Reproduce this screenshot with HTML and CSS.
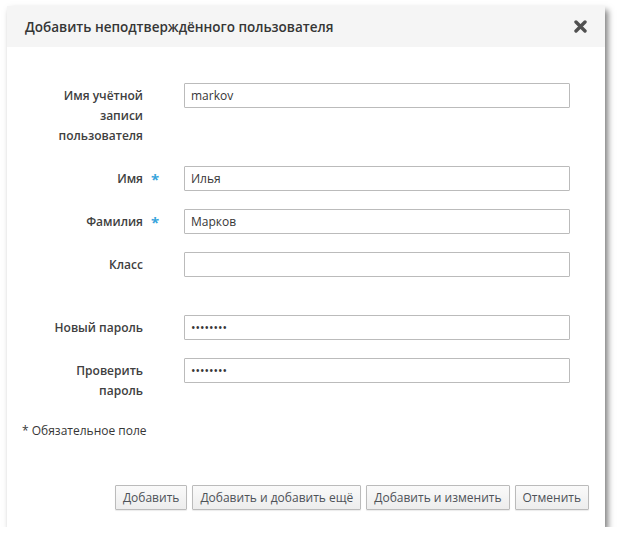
FILE: index.html
```html
<!DOCTYPE html>
<html lang="ru">
<head>
    <meta charset="UTF-8">
    <title>Добавить неподтверждённого пользователя</title>
    <link rel="stylesheet" href="styles.css">
</head>
<body>
    <div class="modal">
        <div class="modal-header">
            <h4>Добавить неподтверждённого пользователя</h4>
            <button class="close" title="Закрыть">
                <svg width="13" height="13" viewBox="0 0 13 13">
                    <path d="M2 2 L11 11 M11 2 L2 11" stroke="#505050" stroke-width="3.4" stroke-linecap="round"/>
                </svg>
            </button>
        </div>

        <div class="modal-body">
            <div class="section">
                <div class="row">
                    <label for="uid">Имя учётной записи пользователя</label>
                    <span class="req"></span>
                    <input type="text" id="uid" value="markov">
                </div>
                <div class="row">
                    <label for="givenname">Имя</label>
                    <span class="req">*</span>
                    <input type="text" id="givenname" value="Илья">
                </div>
                <div class="row">
                    <label for="sn">Фамилия</label>
                    <span class="req">*</span>
                    <input type="text" id="sn" value="Марков">
                </div>
                <div class="row">
                    <label for="userclass">Класс</label>
                    <span class="req"></span>
                    <input type="text" id="userclass" value="">
                </div>
            </div>

            <div class="section">
                <div class="row">
                    <label for="pass">Новый пароль</label>
                    <span class="req"></span>
                    <input type="password" id="pass" value="secret12">
                </div>
                <div class="row">
                    <label for="pass2">Проверить пароль</label>
                    <span class="req"></span>
                    <input type="password" id="pass2" value="secret12">
                </div>
            </div>

            <div class="required-note">* Обязательное поле</div>
        </div>

        <div class="modal-footer">
            <button class="btn">Добавить</button>
            <button class="btn">Добавить и добавить ещё</button>
            <button class="btn">Добавить и изменить</button>
            <button class="btn">Отменить</button>
        </div>
    </div>
</body>
</html>
```

FILE: styles.css
```css
body {
    margin: 0;
    background-color: #ffffff;
    font-family: "Open Sans", "Noto Sans", sans-serif;
    font-size: 12px;
    color: #363636;
}
.modal {
    width: 598px;
    height: 521px;
    margin: 6px 0 0 7px;
    background-color: #ffffff;
    box-shadow: 3px 4px 6px rgba(0, 0, 0, 0.5);
    display: flex;
    flex-direction: column;
}
.modal-header {
    height: 41px;
    background-color: #f5f5f5;
    display: flex;
    align-items: center;
    justify-content: space-between;
    padding: 0 18px 0 18px;
}
.modal-header h4 {
    margin: 0;
    font-size: 13.5px;
    font-weight: 600;
    color: #363636;
}
.close {
    border: none;
    background: none;
    padding: 0;
    display: flex;
    cursor: pointer;
}
.modal-body {
    flex: 1;
    padding: 36px 35px 0 0;
}
.section + .section {
    margin-top: 38px;
}
.row {
    display: flex;
    align-items: flex-start;
    margin-bottom: 18px;
}
.row label {
    width: 106px;
    margin-left: 30px;
    padding: 3px 0 2px;
    text-align: right;
    font-weight: 600;
    color: #404040;
    line-height: 20px;
}
.req {
    width: 33px;
    padding: 6px 0 0 8px;
    color: #39a5dc;
    font-size: 15px;
    font-weight: 700;
    line-height: 15px;
}
.row input {
    width: 386px;
    height: 25px;
    box-sizing: border-box;
    border: 1px solid #bbbbbb;
    border-radius: 1px;
    padding: 0 6px;
    font-family: inherit;
    font-size: 12px;
    color: #363636;
    outline: none;
}
.row input[type="password"] {
    font-size: 12px;
}
.required-note {
    margin-left: 15px;
    line-height: 20px;
}
.modal-footer {
    display: flex;
    justify-content: flex-end;
    gap: 5px;
    padding: 0 16px 17px 0;
}
.btn {
    height: 25px;
    padding: 0 7px;
    border: 1px solid #bbbbbb;
    border-radius: 1px;
    background: linear-gradient(#fafafa, #ededed);
    font-family: inherit;
    font-size: 12px;
    color: #4d5258;
    box-shadow: 0 1px 1px rgba(0, 0, 0, 0.08);
    cursor: pointer;
}
```
